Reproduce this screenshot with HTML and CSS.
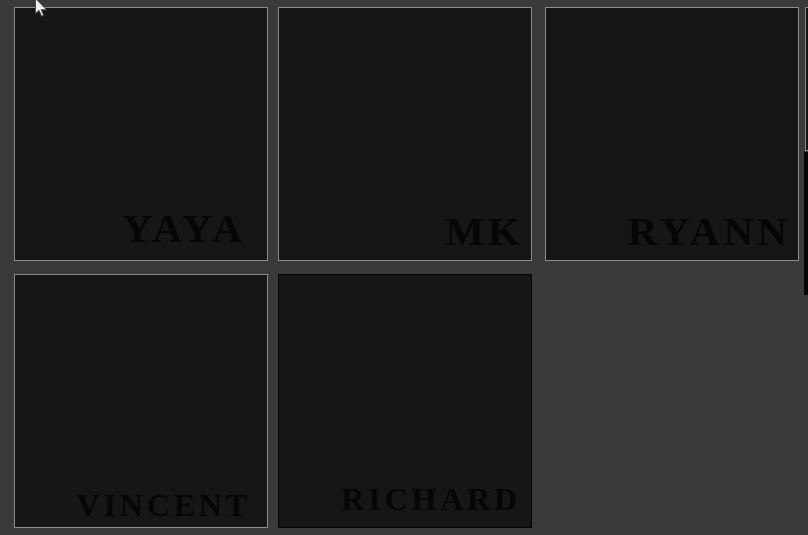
FILE: index.html
```html
<!DOCTYPE html>
<html lang="en">
<head>
<meta charset="utf-8">
<title>Team</title>
<link rel="stylesheet" href="styles.css">
</head>
<body>
<main class="grid">
  <div class="card card-yaya"><span class="name name-lg">Yaya</span></div>
  <div class="card card-mk"><span class="name name-lg">MK</span></div>
  <div class="card card-ryann"><span class="name name-lg">Ryann</span></div>
  <div class="card card-vincent"><span class="name name-sm">Vincent</span></div>
  <div class="card card-richard card-dark"><span class="name name-sm">Richard</span></div>
</main>
<div class="peek">
  <div class="peek-card"></div>
  <div class="peek-shade"></div>
</div>
<svg class="cursor" width="15" height="20" viewBox="0 0 15 20" aria-hidden="true">
  <path d="M1.5 0.5 L1.5 15.5 L5 12.4 L7.6 18.2 L9.7 17.3 L7.2 11.8 L12.5 11.8 Z" fill="#f0f0f0" stroke="#4a4a4a" stroke-width="1" stroke-linejoin="round"/>
</svg>
</body>
</html>
```

FILE: styles.css
```css
html, body {
  margin: 0;
  padding: 0;
}
body {
  background: #3a3a3a;
  width: 808px;
  height: 535px;
  overflow: hidden;
  position: relative;
}
.grid {
  display: grid;
  grid-template-columns: 264px 267px 254px;
  grid-template-rows: 254px 254px;
  row-gap: 13px;
  padding: 7px 0 0 14px;
}
.card {
  box-sizing: border-box;
  width: 254px;
  height: 254px;
  background: #161616;
  border: 1px solid #8c8c8c;
  display: flex;
  align-items: flex-end;
  justify-content: flex-end;
}
.card-dark {
  border-color: #050505;
}
.name {
  font-family: "Liberation Serif", "Times New Roman", serif;
  font-weight: bold;
  text-transform: uppercase;
  color: #060606;
  line-height: 1;
  letter-spacing: 0.1em;
  white-space: nowrap;
}
.name-lg {
  font-size: 41px;
}
.name-sm {
  font-size: 32px;
  letter-spacing: 0.12em;
}
.card-yaya { padding: 0 21px 11px 0; }
.card-mk { padding: 0 7px 8px 0; }
.card-ryann { padding: 0 7px 8px 0; }
.card-vincent { padding: 0 16px 6px 0; }
.card-richard { padding: 0 10px 12px 0; }

.peek {
  position: absolute;
  left: 804px;
  top: 7px;
  width: 4px;
  display: flex;
  flex-direction: column;
}
.peek-card {
  box-sizing: border-box;
  height: 144px;
  background: #161616;
  border: 1px solid #8c8c8c;
  border-right: 0;
  margin-left: 1px;
}
.peek-shade {
  margin-top: 1px;
  height: 143px;
  background: #050505;
}
.cursor {
  position: absolute;
  left: 34px;
  top: -2px;
}
```
